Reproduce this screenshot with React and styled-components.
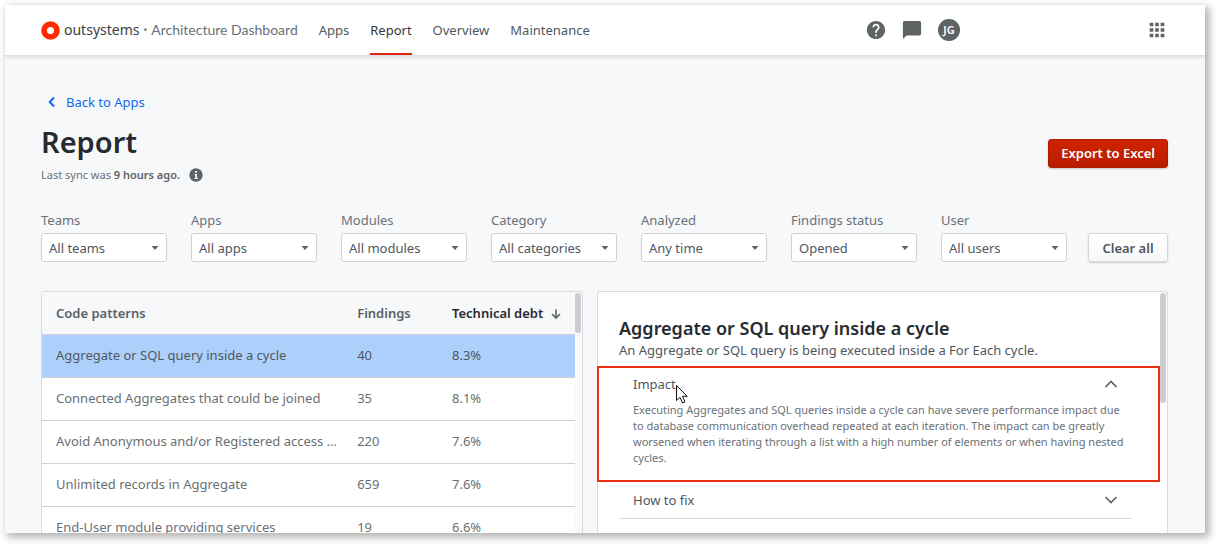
import React from "react";
import styled, { createGlobalStyle } from "styled-components";

const GlobalStyle = createGlobalStyle`
  * { box-sizing: border-box; }
  body { margin: 0; background: #fff; }
  body, button, select {
    font-family: "Noto Sans", sans-serif;
    font-size: 13px;
    line-height: 18px;
    color: #4f575e;
  }
  h1, h2, p { margin: 0; }
`;

const Page = styled.div`
  display: flex;
  height: 100vh;
  padding: 5px 14px 14px 5px;
`;

const Frame = styled.div`
  flex: 1;
  min-width: 0;
  display: flex;
  flex-direction: column;
  overflow: hidden;
  background: #f7f8fa;
  box-shadow: 3px 3px 8px 1px rgba(0, 0, 0, 0.32);
`;

const Header = styled.header`
  display: flex;
  flex: none;
  align-items: center;
  height: 51px;
  padding: 0 37px 0 36px;
  background: #fff;
  border-bottom: 1px solid #dcdee1;
  box-shadow: 0 1px 4px rgba(0, 0, 0, 0.14);
`;

const Brand = styled.a`
  display: flex;
  align-items: center;
  gap: 4px;
  color: #3a3f44;
  font-size: 14px;
  text-decoration: none;
  white-space: nowrap;
`;

const Bullet = styled.span`
  color: #6a7178;
  font-size: 10px;
`;

const Product = styled.span`
  color: #6a7178;
  font-family: Lato, sans-serif;
`;

const Nav = styled.nav`
  display: flex;
  align-self: stretch;
  gap: 21px;
  margin-left: 21px;
`;

const NavLink = styled.a`
  display: flex;
  align-items: center;
  padding-top: 2px;
  border-bottom: 2px solid ${(p) => (p.$active ? "#dc2410" : "transparent")};
  color: ${(p) => (p.$active ? "#33383d" : "#4f575e")};
  text-decoration: none;
`;

const Tools = styled.div`
  display: flex;
  align-items: center;
  gap: 16px;
  margin: 0 186px 0 auto;
`;

const IconButton = styled.button`
  display: flex;
  padding: 0;
  border: 0;
  background: none;
  color: #5e6366;
`;

const Avatar = styled.button`
  width: 22px;
  height: 22px;
  padding: 0;
  border: 0;
  border-radius: 50%;
  background: #5e6366;
  color: #fff;
  font-size: 11px;
  font-weight: 600;
`;

const Content = styled.main`
  flex: 1;
  min-height: 0;
  display: flex;
  flex-direction: column;
  padding: 37px 37px 0 36px;
`;

const BackLink = styled.a`
  display: flex;
  align-items: center;
  gap: 10px;
  align-self: flex-start;
  padding-left: 7px;
  color: #1068eb;
  text-decoration: none;
`;

const TitleRow = styled.div`
  display: flex;
  align-items: center;
  justify-content: space-between;
  margin-top: 11px;
`;

const Title = styled.h1`
  color: #272b30;
  font-size: 29px;
  font-weight: 600;
  line-height: 40px;
`;

const Sync = styled.p`
  display: flex;
  align-items: center;
  gap: 9px;
  margin-top: 4px;
  color: #6a7178;
  font-size: 11px;
  line-height: 18px;
  strong { font-weight: 600; color: #5b6167; }
`;

const ExportButton = styled.button`
  height: 29px;
  padding: 0 12px;
  border: 1px solid #b01c00;
  border-radius: 3px;
  background: linear-gradient(#cf2300, #b81e00);
  box-shadow: 0 1px 2px rgba(0, 0, 0, 0.2);
  color: #fff;
  font-weight: 600;
`;

const Filters = styled.form`
  display: flex;
  align-items: end;
  gap: 21px;
  margin-top: 27px;
`;

const Fields = styled.div`
  flex: 1;
  display: grid;
  grid-template-columns: repeat(7, 1fr);
  gap: 24px;
`;

const Field = styled.label`
  display: flex;
  flex-direction: column;
  gap: 4px;
  color: #6a7178;
`;

const SelectBox = styled.span`
  display: grid;
  grid-template-columns: 1fr 8px;
  align-items: center;
  > * { grid-row: 1; }
  svg { grid-column: 2; margin-left: -8px; pointer-events: none; }
`;

const Select = styled.select`
  grid-column: 1 / -1;
  width: 100%;
  height: 29px;
  padding: 0 20px 0 7px;
  appearance: none;
  border: 1px solid #ced1d5;
  border-radius: 3px;
  background: #fff;
`;

const ClearButton = styled.button`
  width: 80px;
  height: 29px;
  padding: 0;
  border: 1px solid #d3d6d9;
  border-radius: 3px;
  background: linear-gradient(#fff, #f7f8fa);
  box-shadow: 0 1px 2px rgba(0, 0, 0, 0.16);
  font-weight: 600;
`;

const Panels = styled.div`
  flex: 1;
  min-height: 0;
  display: grid;
  grid-template-columns: 542fr 571fr;
  gap: 14px;
  margin-top: 29px;
`;

const Panel = styled.section`
  display: flex;
  min-width: 0;
  min-height: 0;
  border: 1px solid #d8dadd;
  border-bottom: 0;
  border-radius: 3px 3px 0 0;
  background: ${(p) => (p.$plain ? "#fff" : "#f7f8fa")};
`;

const PanelBody = styled.div`
  flex: 1;
  min-width: 0;
  overflow: clip;
  overflow-clip-margin: 1px;
`;

const ScrollTrack = styled.div`
  flex: none;
  width: 7px;
  padding: 1px 1px 0 0;
`;

const ScrollThumb = styled.div`
  height: ${(p) => (p.$long ? 110 : 40)}px;
  border-radius: 3px;
  background: #caccd0;
`;

const Table = styled.table`
  width: 100%;
  table-layout: fixed;
  border-collapse: separate;
  border-spacing: 0;
  background: #fff;
`;

const NameCol = styled.col` width: 56.5%; `;
const FindingsCol = styled.col` width: 17.8%; `;

const HeadCell = styled.th`
  height: 43px;
  padding: 0 0 0 14px;
  border-bottom: 1px solid #ced1d5;
  background: #f7f8fa;
  color: ${(p) => (p.$sorted ? "#272b30" : "#5b6167")};
  font-weight: 600;
  text-align: left;
  svg { margin-left: 8px; vertical-align: -2px; color: #5e6366; }
`;

const Row = styled.tr`
  background: ${(p) => (p.$selected ? "#acd0fb" : "#fff")};
  color: ${(p) => (p.$selected ? "#4f575e" : "#6a6f73")};
`;

const Cell = styled.td`
  height: 43px;
  padding: 0 0 2px 14px;
  border-bottom: 1px solid #ced1d5;
  white-space: nowrap;
`;

const Intro = styled.div`
  padding: 23px 21px 7px;
  color: #4f575e;
`;

const PatternTitle = styled.h2`
  color: #272b30;
  font-size: 18px;
  font-weight: 600;
  line-height: 26px;
`;

const OpenItem = styled.div`
  position: relative;
  margin-left: -1px;
  padding: 7px 40px 14px 34px;
  border: 2px solid #ee2e10;
`;

const ClosedItem = styled.div`
  margin: 0 28px 0 21px;
  padding: 9px 14px;
  border-bottom: 1px solid #d8dadd;
`;

const ItemToggle = styled.button`
  display: flex;
  align-items: center;
  justify-content: space-between;
  width: 100%;
  padding: 0;
  border: 0;
  background: none;
`;

const ItemText = styled.p`
  margin-top: 9px;
  margin-right: -8px;
  color: #6a7178;
  font-size: 11px;
  line-height: 16px;
`;

const Pointer = styled.svg`
  position: absolute;
  left: 76px;
  top: 16px;
`;

const Chevron = ({ up }) => (
  <svg width="14" height="8" viewBox="0 0 14 8" fill="none" stroke="#5e6366" strokeWidth="1.7" aria-hidden="true">
    <path d={up ? "M1.5 7 7 1.5 12.5 7" : "M1.5 1 7 6.5 12.5 1"} />
  </svg>
);

const filters = [
  ["Teams", "All teams"],
  ["Apps", "All apps"],
  ["Modules", "All modules"],
  ["Category", "All categories"],
  ["Analyzed", "Any time"],
  ["Findings status", "Opened"],
  ["User", "All users"],
];

const patterns = [
  ["Aggregate or SQL query inside a cycle", 40, "8.3%"],
  ["Connected Aggregates that could be joined", 35, "8.1%"],
  ["Avoid Anonymous and/or Registered access ...", 220, "7.6%"],
  ["Unlimited records in Aggregate", 659, "7.6%"],
  ["End-User module providing services", 19, "6.6%"],
];

export default function App() {
  return (
    <Page>
      <GlobalStyle />
      <Frame>
        <Header>
          <Brand href="#">
            <svg width="19" height="20" viewBox="0 0 19 20" aria-hidden="true">
              <circle cx="9.5" cy="10.5" r="6.4" fill="#fff" stroke="#ff2a00" strokeWidth="5.8" />
            </svg>
            <span>outsystems</span>
            <Bullet>•</Bullet>
            <Product>Architecture Dashboard</Product>
          </Brand>
          <Nav>
            <NavLink href="#">Apps</NavLink>
            <NavLink href="#" $active>Report</NavLink>
            <NavLink href="#">Overview</NavLink>
            <NavLink href="#">Maintenance</NavLink>
          </Nav>
          <Tools>
            <IconButton aria-label="Help">
              <svg width="20" height="22" viewBox="1 1 22 22" fill="currentColor">
                <path d="M12 2C6.48 2 2 6.48 2 12s4.48 10 10 10 10-4.48 10-10S17.52 2 12 2zm1 17h-2v-2h2v2zm2.07-7.75l-.9.92C13.45 12.9 13 13.5 13 15h-2v-.5c0-1.1.45-2.1 1.17-2.83l1.24-1.26c.37-.36.59-.86.59-1.41 0-1.1-.9-2-2-2s-2 .9-2 2H8c0-2.21 1.79-4 4-4s4 1.79 4 4c0 .88-.36 1.68-.93 2.25z" />
              </svg>
            </IconButton>
            <IconButton aria-label="Feedback">
              <svg width="20" height="22" viewBox="1 1 22 22" fill="currentColor">
                <path d="M20 2H4c-1.1 0-2 .9-2 2v18l4-4h14c1.1 0 2-.9 2-2V4c0-1.1-.9-2-2-2z" />
              </svg>
            </IconButton>
            <Avatar>JG</Avatar>
          </Tools>
          <IconButton aria-label="Applications">
            <svg width="22" height="22" viewBox="0 0 24 24" fill="currentColor">
              <path d="M4 8h4V4H4v4zm6 12h4v-4h-4v4zm-6 0h4v-4H4v4zm0-6h4v-4H4v4zm6 0h4v-4h-4v4zm6-10v4h4V4h-4zm-6 4h4V4h-4v4zm6 6h4v-4h-4v4zm0 6h4v-4h-4v4z" />
            </svg>
          </IconButton>
        </Header>
        <Content>
          <BackLink href="#">
            <svg width="8" height="12" viewBox="0 0 8 12" fill="none" stroke="currentColor" strokeWidth="2" aria-hidden="true">
              <path d="M6 1.500 1.800 6 6 10.500" />
            </svg>
            Back to Apps
          </BackLink>
          <TitleRow>
            <div>
              <Title>Report</Title>
              <Sync>
                <span>Last sync was <strong>9 hours ago.</strong></span>
                <svg width="14" height="14" viewBox="0 0 14 14" aria-hidden="true">
                  <circle cx="7" cy="7" r="6.700" fill="#5e6366" />
                  <path d="M5.500 6H7.900V10H9V11H5.400V10H6.300V7H5.500zM6.200 3H8V4.700H6.200z" fill="#fff" />
                </svg>
              </Sync>
            </div>
            <ExportButton>Export to Excel</ExportButton>
          </TitleRow>
          <Filters>
            <Fields>
              {filters.map(([label, value]) => (
                <Field key={label}>
                  {label}
                  <SelectBox>
                    <Select defaultValue={value}>
                      <option>{value}</option>
                    </Select>
                    <svg width="8" height="4" viewBox="0 0 8 4" fill="#5e6366" aria-hidden="true">
                      <path d="M0.500 0h7L4 4z" />
                    </svg>
                  </SelectBox>
                </Field>
              ))}
            </Fields>
            <ClearButton type="button">Clear all</ClearButton>
          </Filters>
          <Panels>
            <Panel>
              <PanelBody>
                <Table>
                  <colgroup>
                    <NameCol />
                    <FindingsCol />
                    <col />
                  </colgroup>
                  <thead>
                    <tr>
                      <HeadCell>Code patterns</HeadCell>
                      <HeadCell>Findings</HeadCell>
                      <HeadCell $sorted aria-sort="descending">
                        Technical debt
                        <svg width="10" height="12" viewBox="0 0 10 12" fill="none" stroke="currentColor" strokeWidth="1.6" aria-hidden="true">
                          <path d="M5 1.500V10M1 6 5 10 9 6" />
                        </svg>
                      </HeadCell>
                    </tr>
                  </thead>
                  <tbody>
                    {patterns.map(([name, findings, debt], i) => (
                      <Row key={name} $selected={i === 0}>
                        <Cell>{name}</Cell>
                        <Cell>{findings}</Cell>
                        <Cell>{debt}</Cell>
                      </Row>
                    ))}
                  </tbody>
                </Table>
              </PanelBody>
              <ScrollTrack><ScrollThumb /></ScrollTrack>
            </Panel>
            <Panel $plain>
              <PanelBody>
                <Intro>
                  <PatternTitle>Aggregate or SQL query inside a cycle</PatternTitle>
                  <p>An Aggregate or SQL query is being executed inside a For Each cycle.</p>
                </Intro>
                <OpenItem>
                  <ItemToggle aria-expanded="true">Impact<Chevron up /></ItemToggle>
                  <ItemText>
                    Executing Aggregates and SQL queries inside a cycle can have severe performance impact due
                    to database communication overhead repeated at each iteration. The impact can be greatly
                    worsened when iterating through a list with a high number of elements or when having nested
                    cycles.
                  </ItemText>
                  <Pointer width="14" height="21" viewBox="0 0 14 21" aria-hidden="true">
                    <path d="M1.500 1.500V16.500L5 13.300 7.500 19 10 17.900 7.500 12.300H12.200z" fill="#fff" stroke="#111" strokeWidth="1" />
                  </Pointer>
                </OpenItem>
                <ClosedItem>
                  <ItemToggle aria-expanded="false">How to fix<Chevron /></ItemToggle>
                </ClosedItem>
              </PanelBody>
              <ScrollTrack><ScrollThumb $long /></ScrollTrack>
            </Panel>
          </Panels>
        </Content>
      </Frame>
    </Page>
  );
}
